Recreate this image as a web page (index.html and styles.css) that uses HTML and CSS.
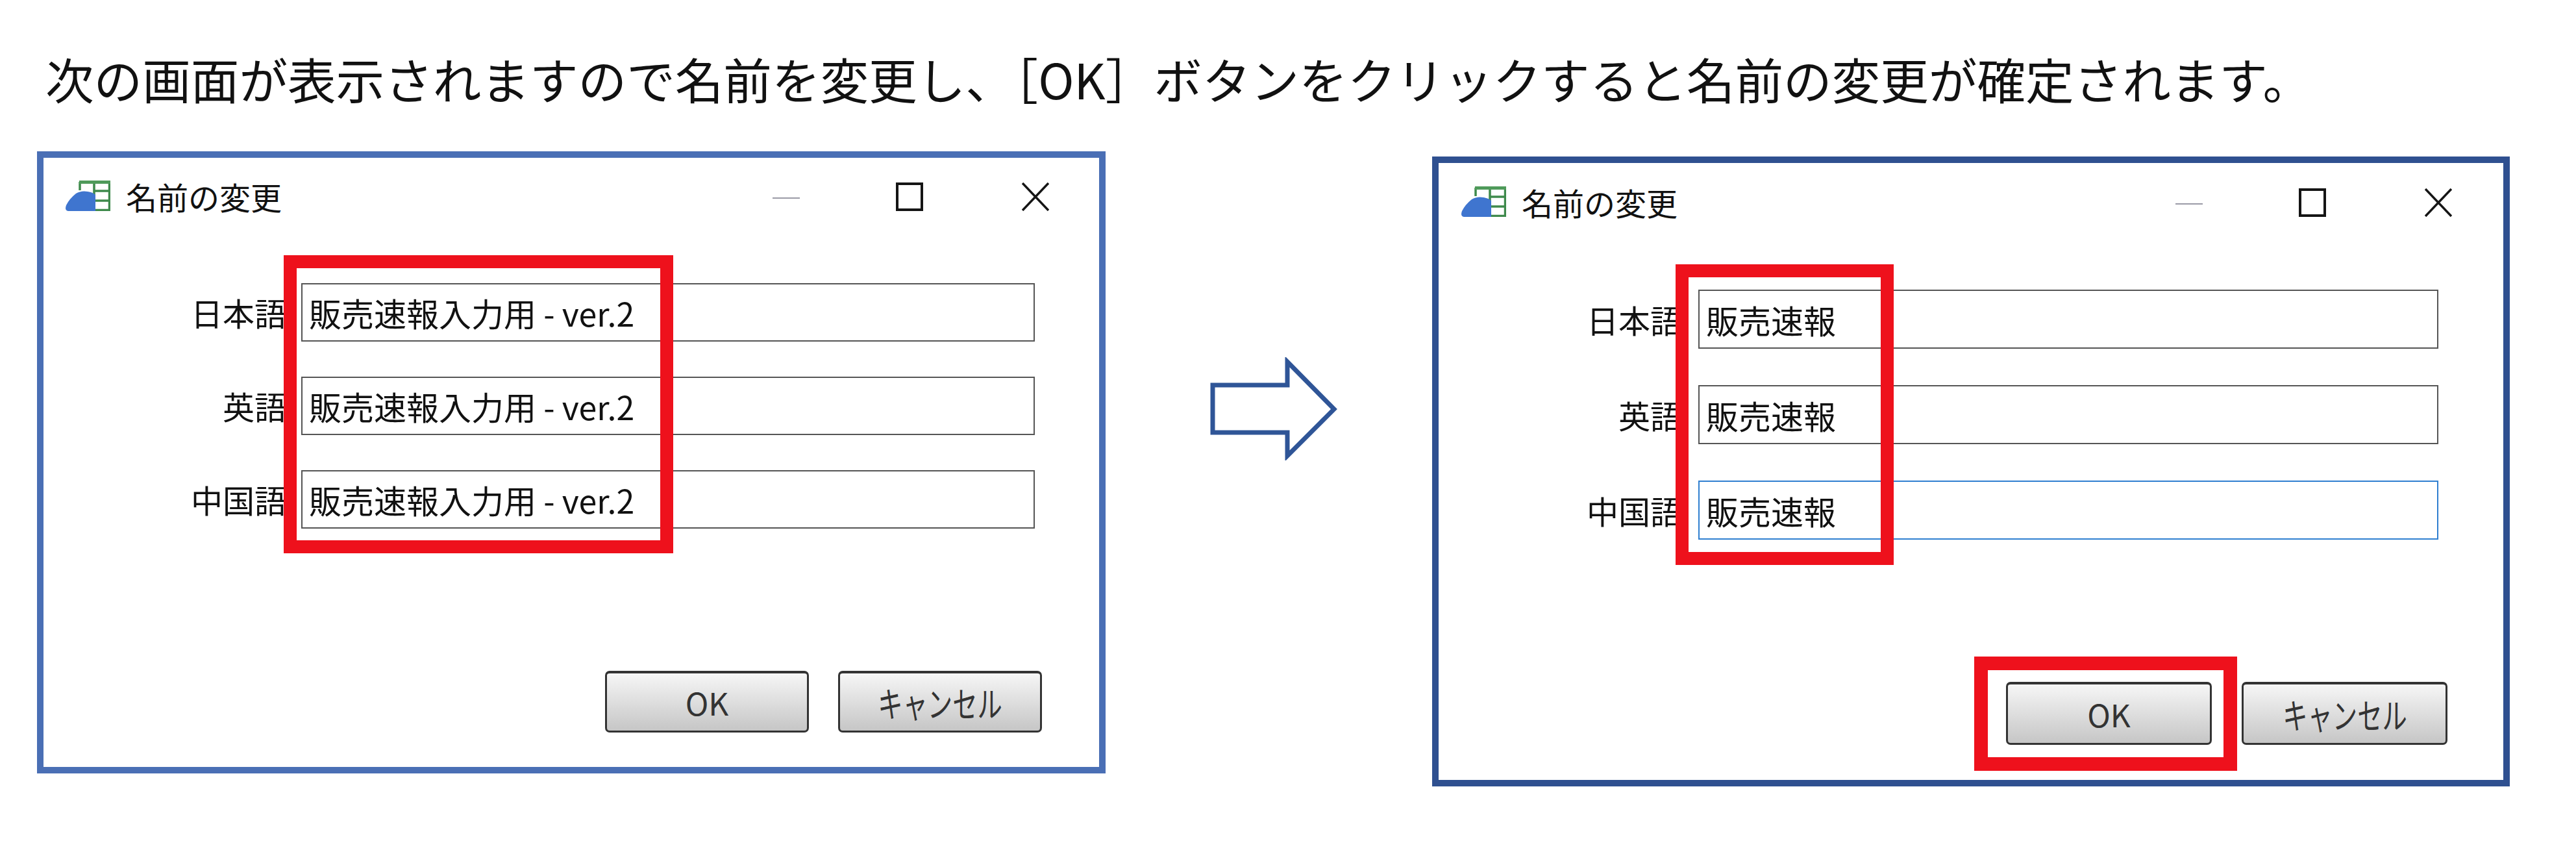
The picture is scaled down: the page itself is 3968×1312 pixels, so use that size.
FILE: index.html
```html
<!DOCTYPE html>
<html lang="ja">
<head>
  <meta charset="UTF-8">
  <title>名前の変更</title>
  <link rel="stylesheet" href="styles.css">
</head>
<body>

<h1 class="lead">次の画面が表示されますので名前を変更し、［OK］ボタンをクリックすると名前の変更が確定されます。</h1>

<div class="compare">

  <div class="dialog dialog-before">
    <div class="titlebar">
      <svg class="app-icon" viewBox="0 0 69 47">
        <path d="M22 2H67.5V45.5H44M44 2V45.5M22 2V15M44 16H68M44 31H68" fill="none" stroke="#3f8a4c" stroke-width="3.5"/>
        <path d="M21 0H69V5H21Z" fill="#4f9a5a"/>
        <path d="M4 47Q-2 46 1 38Q6 28 16 20Q24 15 34 17Q42 18 46 22V47Z" fill="#3f75cf"/>
      </svg>
      <span class="title">名前の変更</span>
      <div class="controls">
        <svg class="ctl" viewBox="0 0 42 44"><path d="M0 24H42" stroke="#9a9aa6" stroke-width="2"/></svg>
        <svg class="ctl" viewBox="0 0 42 44"><rect x="2" y="2" width="38" height="40" fill="none" stroke="#151515" stroke-width="4"/></svg>
        <svg class="ctl" viewBox="0 0 42 44"><path d="M1 1L41 43M41 1L1 43" fill="none" stroke="#151515" stroke-width="3.5"/></svg>
      </div>
    </div>
    <div class="fields">
      <label>日本語</label><input value="販売速報入力用 - ver.2">
      <label>英語</label><input value="販売速報入力用 - ver.2">
      <label>中国語</label><input value="販売速報入力用 - ver.2">
    </div>
    <div class="buttons">
      <button>OK</button>
      <button><span class="narrow">キャンセル</span></button>
    </div>
    <div class="mark mark-fields"></div>
  </div>

  <svg class="arrow" viewBox="0 0 197 159">
    <path d="M4 43H119V7L191 80L119 152V116H4Z" fill="#fff" stroke="#2f5597" stroke-width="7"/>
  </svg>

  <div class="dialog dialog-after">
    <div class="titlebar">
      <svg class="app-icon" viewBox="0 0 69 47">
        <path d="M22 2H67.5V45.5H44M44 2V45.5M22 2V15M44 16H68M44 31H68" fill="none" stroke="#3f8a4c" stroke-width="3.5"/>
        <path d="M21 0H69V5H21Z" fill="#4f9a5a"/>
        <path d="M4 47Q-2 46 1 38Q6 28 16 20Q24 15 34 17Q42 18 46 22V47Z" fill="#3f75cf"/>
      </svg>
      <span class="title">名前の変更</span>
      <div class="controls">
        <svg class="ctl" viewBox="0 0 42 44"><path d="M0 24H42" stroke="#9a9aa6" stroke-width="2"/></svg>
        <svg class="ctl" viewBox="0 0 42 44"><rect x="2" y="2" width="38" height="40" fill="none" stroke="#151515" stroke-width="4"/></svg>
        <svg class="ctl" viewBox="0 0 42 44"><path d="M1 1L41 43M41 1L1 43" fill="none" stroke="#151515" stroke-width="3.5"/></svg>
      </div>
    </div>
    <div class="fields">
      <label>日本語</label><input value="販売速報">
      <label>英語</label><input value="販売速報">
      <label>中国語</label><input class="focused" value="販売速報">
    </div>
    <div class="buttons">
      <button>OK</button>
      <button><span class="narrow">キャンセル</span></button>
    </div>
    <div class="mark mark-fields"></div>
    <div class="mark mark-ok"></div>
  </div>

</div>

</body>
</html>
```

FILE: styles.css
```css
body {
  margin: 0;
  background: #fff;
  color: #111;
  font-family: "Noto Sans CJK JP", "Noto Sans", sans-serif;
}
.lead {
  margin: 0;
  padding: 70px 0 0 70px;
  height: 100px;
  font-size: 74.6px;
  line-height: 100px;
  font-weight: 400;
  white-space: nowrap;
}
.compare {
  display: flex;
  align-items: flex-start;
  padding: 63px 0 0 57px;
}
.arrow {
  width: 197px;
  height: 159px;
  margin: 317px 145px 0 161px;
  flex: none;
}

/* dialogs */
.dialog {
  position: relative;
  box-sizing: border-box;
  flex: none;
  display: flex;
  flex-direction: column;
  background: #fff;
  border: 10px solid #4a6fb5;
}
.dialog-before {
  width: 1646px;
  height: 958px;
}
.dialog-after {
  width: 1660px;
  height: 970px;
  margin-top: 8px;
  border-color: #2f5090;
}
.titlebar {
  display: flex;
  align-items: flex-start;
  padding: 35px 77px 0 34px;
  height: 158px;
}
.dialog-after .titlebar {
  padding: 36px 79px 0 35px;
  height: 159px;
}
.app-icon {
  width: 69px;
  height: 47px;
  flex: none;
}
.title {
  margin: -11px 0 0 24px;
  font-size: 48px;
  line-height: 70px;
}
.controls {
  display: flex;
  margin-left: auto;
  margin-top: 3px;
}
.ctl {
  width: 42px;
  height: 44px;
  margin-left: 148px;
}
.ctl:first-child {
  margin-left: 0;
}
.ctl:last-child {
  margin-left: 152px;
}
.fields {
  display: grid;
  grid-template-columns: 374px 1130px;
  column-gap: 23px;
  row-gap: 54px;
  align-items: center;
}
.dialog-after .fields {
  grid-template-columns: 375px 1140px;
  column-gap: 25px;
  row-gap: 56px;
}
.fields label {
  text-align: right;
  font-size: 49px;
  line-height: 60px;
}
.fields input {
  box-sizing: border-box;
  width: 100%;
  height: 90px;
  padding: 0 10px;
  border: 2px solid #555;
  border-radius: 0;
  outline: none;
  background: #fff;
  color: #111;
  font: 50px "Noto Sans CJK JP", "Noto Sans", sans-serif;
}
.dialog-after .fields input {
  height: 91px;
}
.fields input.focused {
  border-color: #2f7fd0;
}
.buttons {
  display: flex;
  justify-content: flex-end;
  gap: 45px;
  margin-top: auto;
  padding: 0 88px 53px 0;
}
.dialog-after .buttons {
  gap: 46px;
  padding: 0 86px 54px 0;
}
.buttons button {
  width: 314px;
  height: 95px;
  padding: 0;
  border: 3px solid #333;
  border-top-width: 4px;
  border-radius: 7px;
  background: linear-gradient(#f6f6f6, #c6c6c6);
  color: #333;
  font: 48px "Noto Sans CJK JP", "Noto Sans", sans-serif;
}
.dialog-after .buttons button {
  width: 317px;
  height: 97px;
}
.narrow {
  display: inline-block;
  font-size: 54px;
  transform: scaleX(0.71);
}

/* red call-outs drawn over the screenshot */
.mark {
  position: absolute;
  box-sizing: border-box;
  border: 20px solid #ee111c;
}
.dialog-before .mark-fields {
  left: 370px;
  top: 150px;
  width: 600px;
  height: 459px;
}
.dialog-after .mark-fields {
  left: 365px;
  top: 156px;
  width: 336px;
  height: 463px;
}
.mark-ok {
  left: 825px;
  top: 760px;
  width: 405px;
  height: 176px;
  border-width: 21px;
}
```
